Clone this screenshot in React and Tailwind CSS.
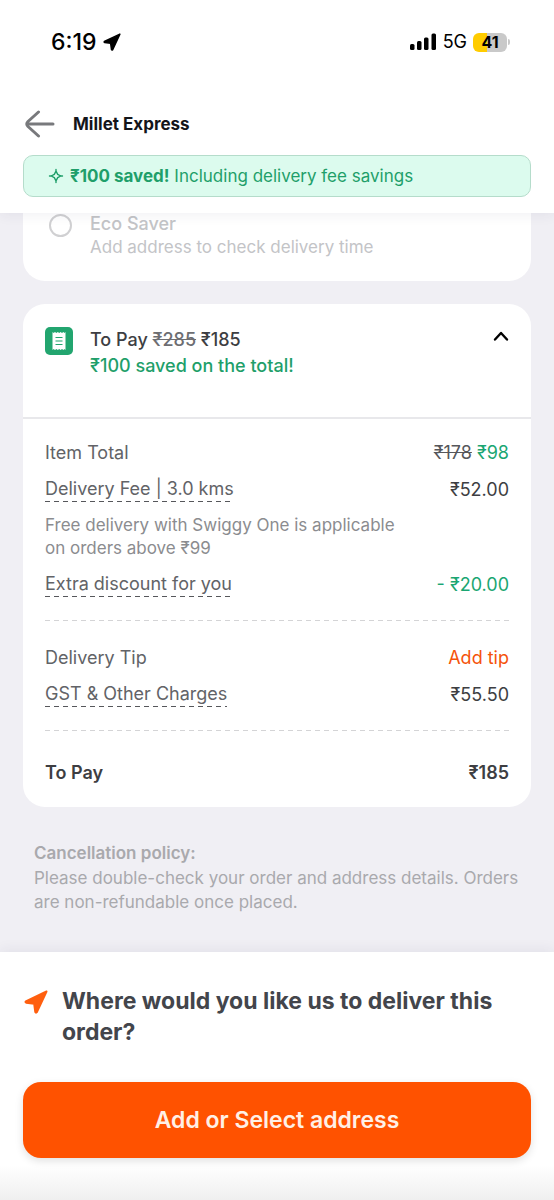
import React, { useState } from 'react';

const LocationArrow = ({ className }) => (
    <svg viewBox="0 0 24 24" className={className} fill="currentColor" stroke="currentColor" strokeWidth={2} strokeLinejoin="round" aria-hidden="true">
        <path d="M22.5 1.5 L1.8 11.3 Q1 12.2 2.2 12.7 L10.2 13.8 L11.3 22 Q12 23.2 12.9 22.2 Z" />
    </svg>
);

const StatusBar = () => (
    <div className="flex items-center justify-between pl-[51px] pr-11 h-[84px] text-black">
        <div className="flex items-center gap-1.5">
            <span className="text-[23px] leading-7 font-medium">6:19</span>
            <LocationArrow className="w-[18px] h-[18px]" />
        </div>
        <div className="flex items-center">
            <svg viewBox="0 0 27 18" className="w-[27px] h-[18px]" fill="currentColor" role="img" aria-label="Signal">
                <rect x="0" y="11" width="4.5" height="6" rx="1.5" />
                <rect x="7" y="8" width="4.5" height="9" rx="1.5" />
                <rect x="14" y="4.5" width="4.5" height="12.5" rx="1.5" />
                <rect x="21.5" y="0.5" width="4.5" height="16.5" rx="1.5" />
            </svg>
            <span className="ml-1.5 text-lg leading-6">5G</span>
            <div className="ml-1.5 w-[34px] h-[19px] rounded-md bg-[linear-gradient(90deg,#ffcc00_42%,#c9c9c9_42%)] flex items-center justify-center">
                <span className="text-base leading-none font-bold">41</span>
            </div>
            <span className="ml-px w-[2px] h-1.5 rounded-r bg-[#c9c9c9]" />
        </div>
    </div>
);

const Divider = () => (
    <hr className="border-0 h-px bg-[repeating-linear-gradient(90deg,#d4d4d6_0_5px,transparent_5px_9px)]" />
);

const BillLabel = ({ children, dashed }) =>
    dashed ? (
        <button type="button" className="text-left pb-px bg-[repeating-linear-gradient(90deg,#56575b_0_5px,transparent_5px_9px)] bg-[length:100%_1px] bg-bottom bg-no-repeat">
            {children}
        </button>
    ) : (
        <span>{children}</span>
    );

const BillRow = ({ label, dashed, children }) => (
    <div className="flex items-center justify-between h-[37px]">
        <dt className="text-[#626367]">
            <BillLabel dashed={dashed}>{label}</BillLabel>
        </dt>
        <dd className="text-[#3d3e42]">{children}</dd>
    </div>
);

const Header = () => (
    <header className="relative z-10 bg-white pb-4 shadow-[0_2px_12px_rgba(40,40,80,0.07)]">
        <StatusBar />
        <div className="flex items-center h-[71px] px-6 pt-2">
            <button type="button" aria-label="Go back" className="text-[#78797c]">
                <svg viewBox="0 0 32 28" className="w-8 h-7" fill="none" stroke="currentColor" strokeWidth={3} strokeLinecap="round" strokeLinejoin="round">
                    <path d="M29 14 H3 M14.5 2 L4 11.5 Q1.5 14 4 16.5 L14.5 26" />
                </svg>
            </button>
            <h1 className="ml-[17px] text-[17px] leading-6 font-bold text-[#14151a]">Millet Express</h1>
        </div>
        <div className="mx-[23px] h-[42px] px-6 flex items-center rounded-[10px] border border-[#b5dccb] bg-[#dcfbee] text-[#1f9f6a]">
            <svg viewBox="0 0 16 16" className="w-4 h-4" fill="none" stroke="currentColor" strokeWidth={1.4} strokeLinejoin="round" strokeLinecap="round" aria-hidden="true">
                <path d="M8 3.2 L9.7 6.3 L12.8 8 L9.7 9.7 L8 12.8 L6.3 9.7 L3.2 8 L6.3 6.3 Z M8 1.5 V3.2 M8 12.8 V14.5 M1.5 8 H3.2 M12.8 8 H14.5" />
            </svg>
            <p className="ml-1.5 text-[17px] leading-6">
                <strong className="font-bold">₹100 saved!</strong> Including delivery fee savings
            </p>
        </div>
    </header>
);

const DeliveryOption = () => (
    <section className="mx-[23px] h-[68px] bg-white rounded-b-[22px] px-[26px]">
        <label className="flex items-start">
            <input type="radio" name="delivery" disabled className="appearance-none mt-px w-[23px] h-[23px] rounded-full border-2 border-[#d0d0d2] shrink-0" />
            <span className="ml-[18px] text-[#c3c4c7]">
                <span className="block text-lg leading-[22px] font-medium">Eco Saver</span>
                <span className="block text-[17px] leading-6">Add address to check delivery time</span>
            </span>
        </label>
    </section>
);

const BillCard = () => {
    const [open, setOpen] = useState(true);

    return (
        <section className="mx-[23px] mt-[23px] bg-white rounded-[22px] text-lg leading-6">
            <div className="flex items-start h-[115px] px-[22px] pt-[23px] border-b-2 border-[#e8e8eb]">
                <svg viewBox="0 0 28 28" className="w-7 h-7 shrink-0" aria-hidden="true">
                    <rect width="28" height="28" rx="5" fill="#22a56f" />
                    <path d="M7.5 5 L8.6 6 L10 5 L11.4 6 L12.8 5 L14.2 6 L15.6 5 L17 6 L18.4 5 L19.5 6 L20.5 5 V23 L19.5 22 L18.4 23 L17 22 L15.6 23 L14.2 22 L12.8 23 L11.4 22 L10 23 L8.6 22 L7.5 23 Z" fill="#fff" />
                    <path d="M10.5 10.5 H17.5 M10.5 14 H17.5 M10.5 17.5 H17.5" stroke="#22a56f" strokeWidth="1.2" />
                </svg>
                <div className="ml-[17px] mt-px flex-1 font-medium">
                    <h2 className="text-[#3d3e42]">
                        To Pay <s className="text-[#6d6e72]">₹285</s> ₹185
                    </h2>
                    <p className="mt-0.5 text-[#1f9f6a]">₹100 saved on the total!</p>
                </div>
                <button type="button" onClick={() => setOpen(!open)} aria-label="Toggle bill details" aria-expanded={open} className="mt-[3px] text-black">
                    <svg viewBox="0 0 16 12" className="w-4 h-3" fill="none" stroke="currentColor" strokeWidth={2.4} strokeLinecap="round" strokeLinejoin="round">
                        <path d="M2 9.5 L8 3 L14 9.5" />
                    </svg>
                </button>
            </div>

            {open && (
                <dl className="px-[22px] pt-[15px] pb-4">
                    <BillRow label="Item Total">
                        <s className="text-[#56575b]">₹178</s> <span className="text-[#1aa672]">₹98</span>
                    </BillRow>
                    <BillRow label="Delivery Fee | 3.0 kms" dashed>₹52.00</BillRow>
                    <p className="my-1.5 max-w-[370px] text-[17px] leading-[23px] text-[#8b8c8f]">
                        Free delivery with Swiggy One is applicable on orders above ₹99
                    </p>
                    <BillRow label="Extra discount for you" dashed>
                        <span className="text-[#1aa672]">- ₹20.00</span>
                    </BillRow>
                    <div className="pt-[17px] pb-[18px]"><Divider /></div>
                    <BillRow label="Delivery Tip">
                        <button type="button" className="text-[#f5530a]">Add tip</button>
                    </BillRow>
                    <BillRow label="GST & Other Charges" dashed>₹55.50</BillRow>
                    <div className="pt-[17px] pb-[23px]"><Divider /></div>
                    <div className="flex items-center justify-between h-[37px] font-semibold text-[#3d3e42]">
                        <dt>To Pay</dt>
                        <dd>₹185</dd>
                    </div>
                </dl>
            )}
        </section>
    );
};

const Footer = () => (
    <footer className="relative bg-[linear-gradient(#ffffff_86%,#efefef_100%)] px-[23px] pt-[34px] pb-[42px] shadow-[0_-2px_12px_rgba(40,40,80,0.07)]">
        <div className="flex items-start">
            <LocationArrow className="mt-1 ml-px w-6 h-6 shrink-0 text-[#ff5f0f]" />
            <h2 className="ml-3.5 text-[23px] leading-[31px] font-bold text-[#43454b]">
                Where would you like us to deliver this order?
            </h2>
        </div>
        <button type="button" className="mt-[34px] w-full h-[76px] rounded-[18px] bg-[#ff5200] text-[#fff0e6] text-[23px] font-semibold shadow-[0_3px_8px_rgba(0,0,0,0.12)]">
            Add or Select address
        </button>
    </footer>
);

export default function App() {
    return (
        <div className="min-h-screen flex flex-col bg-[#f0eff4] font-['Inter','Noto_Sans',sans-serif]">
            <Header />
            <main className="flex-1 pb-[37px]">
                <DeliveryOption />
                <BillCard />
                <section className="mt-[34px] mx-[34px] text-[17px] leading-6 text-[#a9a9ad]">
                    <h3 className="font-semibold">Cancellation policy:</h3>
                    <p className="mt-px">Please double-check your order and address details. Orders are non-refundable once placed.</p>
                </section>
            </main>
            <Footer />
        </div>
    );
}
